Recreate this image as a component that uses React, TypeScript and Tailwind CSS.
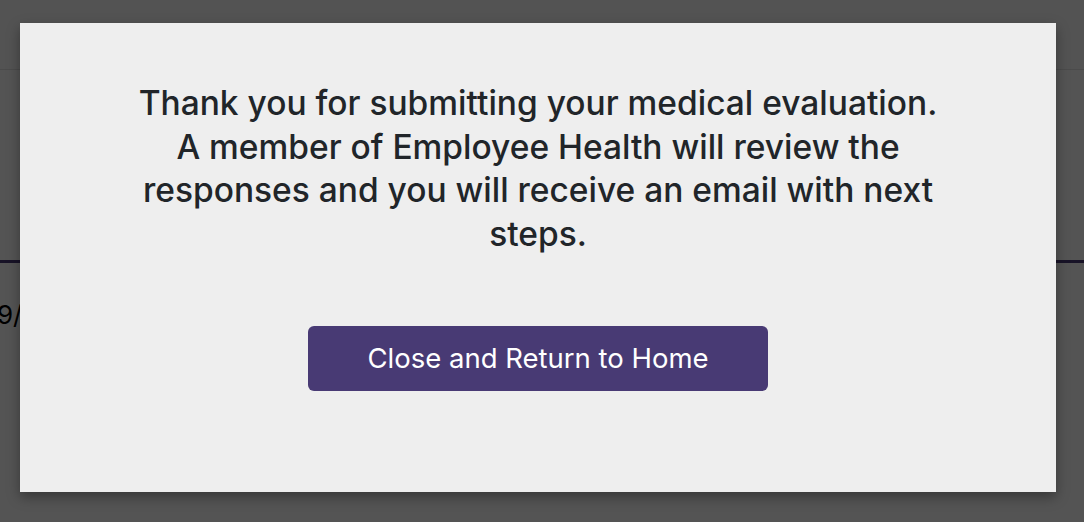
export default function App() {
  return (
    <div className="relative h-[522px] w-[1084px] overflow-hidden bg-white font-['Inter','Noto_Sans',sans-serif] text-[#212529]">
      {/* page behind the modal */}
      <div className="h-[70px] border-b border-[#e2e2e2] bg-[#fafafa]" />
      <div className="mt-[190px] h-[3px] bg-[#4a3a76]" />
      <p className="mt-[36px] -ml-[3px] text-[26px] leading-[32px] text-black">9/12/2024</p>

      {/* backdrop */}
      <div className="absolute inset-0 flex items-start bg-black/[0.67] pl-[20px] pt-[23px]">
        <div
          role="dialog"
          aria-modal="true"
          className="flex h-[469px] w-[1036px] flex-col items-center bg-[#eeeeee] pt-[59px] shadow-[0_5px_12px_rgba(0,0,0,0.35)]"
        >
          <h2 className="w-[830px] text-center text-[33.5px] font-medium leading-[43.5px] text-[#212529]">
            Thank you for submitting your medical evaluation. A member of Employee Health will review the responses and
            you will receive an email with next steps.
          </h2>
          <button
            type="button"
            className="mt-[70px] h-[65px] w-[460px] rounded-[6px] bg-[#483a74] text-[27.5px] font-normal text-white"
          >
            Close and Return to Home
          </button>
        </div>
      </div>
    </div>
  );
}
